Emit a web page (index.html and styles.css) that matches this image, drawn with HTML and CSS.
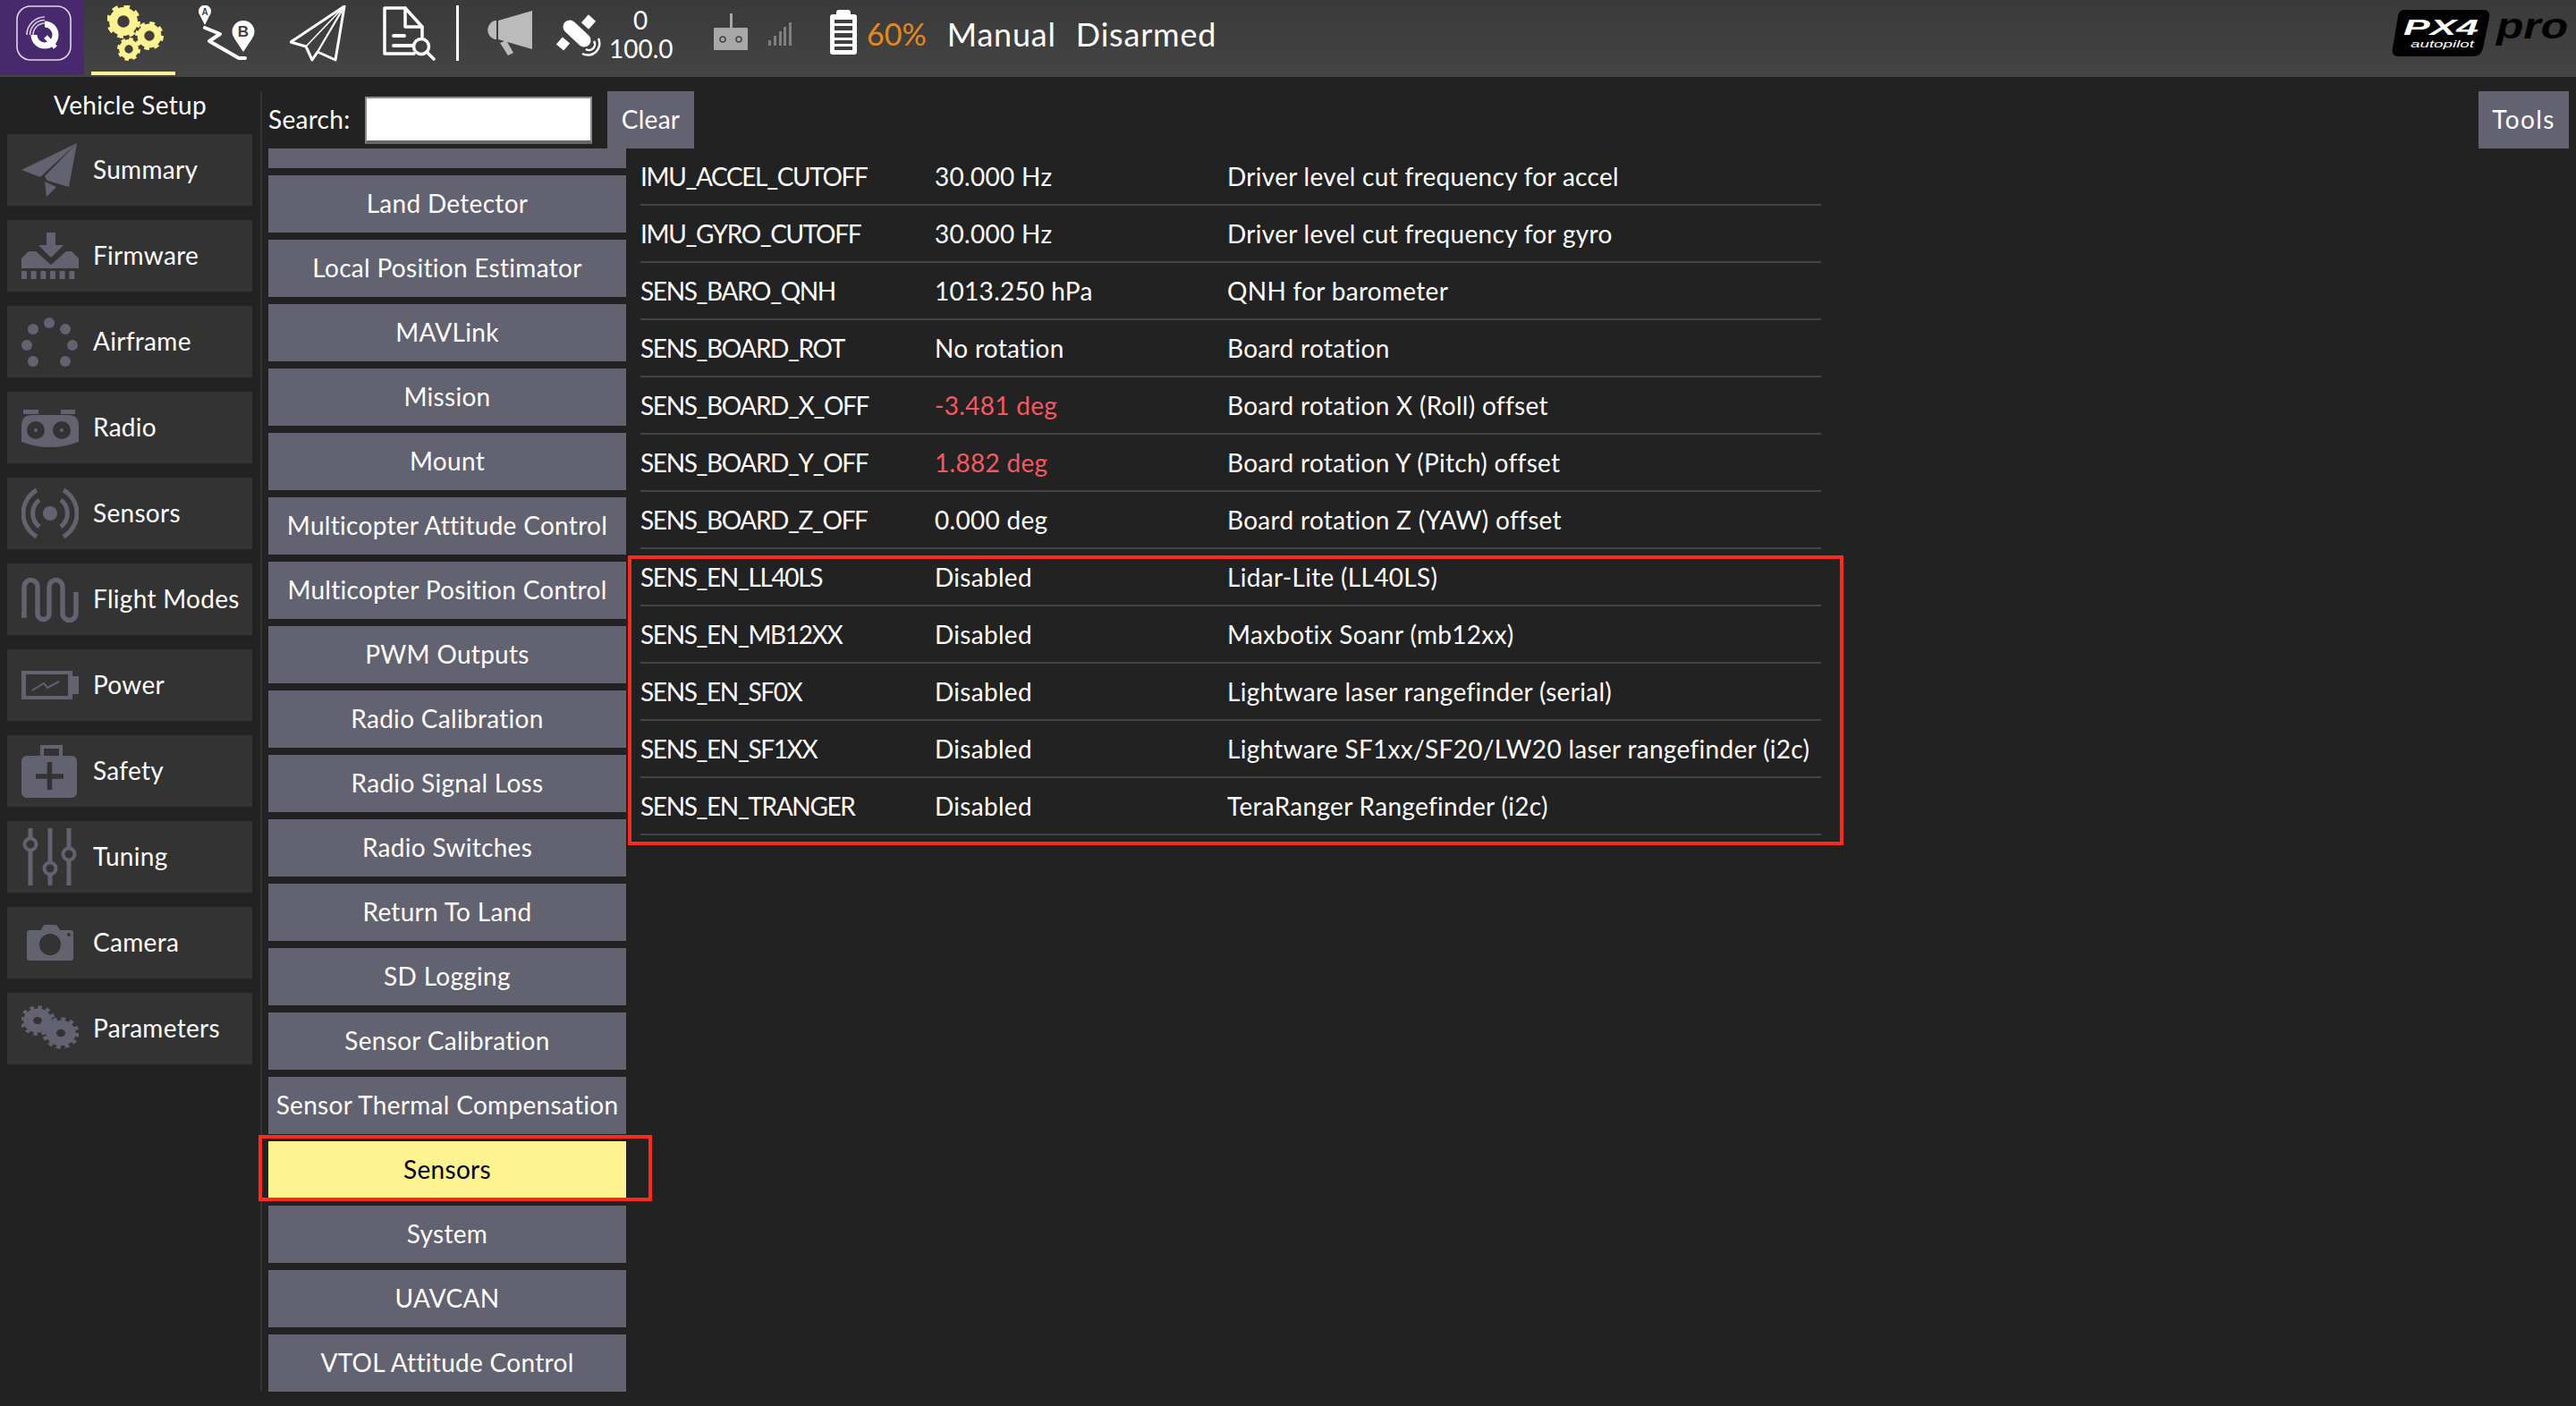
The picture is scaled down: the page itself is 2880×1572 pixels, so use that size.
FILE: index.html
```html
<!DOCTYPE html>
<html lang="en">
<head>
    <meta charset="UTF-8">
    <meta name="viewport" content="width=device-width, initial-scale=1.0">
    <title>QGroundControl</title>
    <link rel="stylesheet" href="styles.css">
</head>
<body>
    <svg class="defs" width="0" height="0">
        <symbol id="gear" viewBox="-50 -50 100 100">
            <circle r="30" fill="none" stroke="currentColor" stroke-width="24"/>
            <circle r="44" fill="none" stroke="currentColor" stroke-width="12" pathLength="16" stroke-dasharray="1 1"/>
        </symbol>
        <symbol id="cog" viewBox="-50 -50 100 100">
            <g transform="scale(1 .85)">
                <circle r="26" fill="none" stroke="currentColor" stroke-width="28"/>
                <circle r="44" fill="none" stroke="currentColor" stroke-width="11" pathLength="24" stroke-dasharray="1 1"/>
            </g>
        </symbol>
    </svg>

    <div class="toolbar">
        <div class="tool-btn brand">
            <svg class="tool-icon" viewBox="0 0 64 64" fill="none" stroke="#fff">
                <rect x="1" y="1" width="60" height="60" rx="15" stroke="#ddd8e6" stroke-width="1.6"/>
                <path d="M32 21A12 12 0 1 1 20 33" stroke-width="7"/>
                <path d="M33 35L44 47" stroke-width="5"/>
                <path d="M12 33A20 20 0 0 1 32 13M15.500 33A16.500 16.500 0 0 1 32 16.500M19 33A13 13 0 0 1 32 20" stroke="#d5cfe0" stroke-width="1.6"/>
            </svg>
        </div>
        <div class="tool-btn active">
            <svg class="tool-icon" viewBox="0 0 64 64">
                <use href="#gear" x="-1" y="-1" width="38" height="38"/>
                <use href="#gear" x="31" y="18" width="32" height="32"/>
                <use href="#gear" x="11" y="36" width="26" height="26"/>
            </svg>
        </div>
        <div class="tool-btn">
            <svg class="tool-icon" viewBox="0 0 64 64">
                <path d="M7 22L1.500 11A7 7 0 1 1 12.500 11Z" fill="#fff"/>
                <text class="pin-letter pin-a" x="7" y="11">A</text>
                <path d="M50 52L40 37A12.500 12.500 0 1 1 60 37Z" fill="#fff"/>
                <text class="pin-letter pin-b" x="50" y="35">B</text>
                <path d="M7 25L24 32L12 40L45 59L52 59" fill="none" stroke="#fff" stroke-width="4" stroke-linejoin="round" stroke-linecap="round"/>
            </svg>
        </div>
        <div class="tool-btn">
            <svg class="tool-icon" viewBox="0 0 64 64" fill="none" stroke="#fff" stroke-linejoin="round">
                <path d="M61 1L1 41L18 46L25 61L31 52L51 61Z" stroke-width="3"/>
                <path d="M61 1L18 46" stroke-width="1.600"/>
                <path d="M61 1L31 52" stroke-width="2.200"/>
            </svg>
        </div>
        <div class="tool-btn">
            <svg class="tool-icon" viewBox="0 0 64 64" fill="none" stroke="#fff" stroke-width="3.500" stroke-linejoin="round" stroke-linecap="round">
                <path d="M37 54H4V3H27L46 24V35"/>
                <path d="M27 3V24H46"/>
                <path d="M14 34H26M14 45H35" stroke-width="4"/>
                <circle cx="45" cy="46" r="8.500"/>
                <path d="M51 52L59 60"/>
            </svg>
        </div>
        <div class="tool-divider"></div>
        <svg class="status-icon megaphone" viewBox="0 0 56 64" fill="#bbb">
            <path d="M12 17A11 11 0 0 0 12 38H14V17Z"/>
            <path d="M16 17L54 6V49L16 38Z"/>
            <path d="M18 42L25 39L33 53L27 56Z"/>
        </svg>
        <svg class="status-icon satellite" viewBox="0 0 52 64" fill="none" stroke="#fff">
            <path d="M34 23L42 14" stroke-width="11"/>
            <path d="M6 47L13 39" stroke-width="11"/>
            <path d="M17 24L33 39" stroke-width="15" stroke-linecap="round"/>
            <path d="M49 37A13 13 0 0 1 31 54" stroke-width="2.500"/>
            <path d="M44 40A6.500 6.500 0 0 1 35 49" stroke-width="2.500"/>
        </svg>
        <div class="sat-count">
            <span>0</span>
            <span>100.0</span>
        </div>
        <svg class="status-icon remote" viewBox="0 0 38 64">
            <rect x="18" y="9" width="3" height="17" fill="#a8a8a8"/>
            <rect y="25" width="38" height="25" rx="1" fill="#a8a8a8"/>
            <circle cx="10" cy="38" r="3" fill="none" stroke="#444" stroke-width="1.500"/>
            <circle cx="28" cy="38" r="3" fill="none" stroke="#444" stroke-width="1.500"/>
        </svg>
        <svg class="status-icon signal" viewBox="0 0 26 64" fill="#808080">
            <rect x="0" y="39" width="3" height="6"/>
            <rect x="6" y="34" width="3" height="11"/>
            <rect x="12" y="29" width="3" height="16"/>
            <rect x="17" y="24" width="3" height="21"/>
            <rect x="23" y="19" width="3" height="26"/>
        </svg>
        <svg class="status-icon battery" viewBox="0 0 32 64">
            <path d="M8 8Q8 5 11 5H21Q24 5 24 8V10H28Q31 10 31 13V52Q31 55 28 55H4Q1 55 1 52V13Q1 10 4 10H8Z" fill="#fff"/>
            <path d="M6 16H26V20H6ZM6 23H26V28H6ZM6 31H26V36H6ZM6 39H26V43H6ZM6 46H26V50H6Z" fill="#3f3f3f"/>
        </svg>
        <span class="status-text percent">60%</span>
        <span class="status-text flight-mode">Manual</span>
        <span class="status-text armed">Disarmed</span>
        <svg class="brand-logo" width="200" height="64" viewBox="0 0 200 64">
            <path d="M16 5H104Q113 5 111 14L104 48Q102 57 92 57H10Q1 57 3 48L9 12Q10 5 16 5Z" fill="#000"/>
            <text class="logo-big" x="15" y="33" textLength="84" lengthAdjust="spacingAndGlyphs">PX4</text>
            <text class="logo-small" x="23" y="47" textLength="71" lengthAdjust="spacingAndGlyphs">autopilot</text>
            <text class="logo-pro" x="119" y="37" textLength="80" lengthAdjust="spacingAndGlyphs">pro</text>
        </svg>
    </div>

    <div class="main">
        <div class="sidebar">
            <div class="sidebar-title">Vehicle Setup</div>
            <a class="nav-item">
                <svg class="nav-icon" viewBox="0 0 64 64">
                    <path d="M62 2L0 32L21 40Z"/>
                    <path d="M62 2L26 39L29 44L53 51Z"/>
                    <path d="M26 45L39 51L28 62Z"/>
                </svg>
                <span>Summary</span>
            </a>
            <a class="nav-item">
                <svg class="nav-icon" viewBox="0 0 64 64">
                    <path d="M28 6H38V20H47L33 34L19 20H28Z"/>
                    <path d="M0 46V35L8 27H16L33 42L50 27H56L64 35V46Z"/>
                    <path d="M0 53.500H64" fill="none" stroke="#626270" stroke-width="9" stroke-dasharray="6 4.670"/>
                </svg>
                <span>Firmware</span>
            </a>
            <a class="nav-item">
                <svg class="nav-icon" viewBox="0 0 64 64">
                    <circle cx="31" cy="11" r="6"/>
                    <circle cx="13" cy="18" r="6"/>
                    <circle cx="49" cy="18" r="6"/>
                    <circle cx="6" cy="36" r="6"/>
                    <circle cx="57" cy="36" r="6"/>
                    <circle cx="13" cy="54" r="6"/>
                    <circle cx="49" cy="54" r="6"/>
                </svg>
                <span>Airframe</span>
            </a>
            <a class="nav-item">
                <svg class="nav-icon" viewBox="0 0 64 64">
                    <path d="M2 12H19V17H2ZM44 12H60V17H44Z"/>
                    <path d="M0 30Q0 18 12 18H52Q64 18 64 30V48Q32 60 0 48Z"/>
                    <circle cx="16" cy="35" r="10" fill="#333"/>
                    <circle cx="45" cy="35" r="10" fill="#333"/>
                    <circle cx="16" cy="35" r="2"/>
                    <circle cx="45" cy="35" r="2"/>
                </svg>
                <span>Radio</span>
            </a>
            <a class="nav-item">
                <svg class="nav-icon" viewBox="0 0 64 64">
                    <circle cx="32" cy="32" r="8"/>
                    <path d="M20 17A19 19 0 0 0 20 47M44 17A19 19 0 0 1 44 47M17 6A30 30 0 0 0 17 58M47 6A30 30 0 0 1 47 58" fill="none" stroke="#626270" stroke-width="5"/>
                </svg>
                <span>Sensors</span>
            </a>
            <a class="nav-item">
                <svg class="nav-icon" viewBox="0 0 64 64">
                    <path d="M0 50H3V18A7.500 7.500 0 0 1 18 18V48A6.500 6.500 0 0 0 31 48V18A7.500 7.500 0 0 1 46 18V48A7.500 7.500 0 0 0 61 48V24" fill="none" stroke="#626270" stroke-width="5.500"/>
                </svg>
                <span>Flight Modes</span>
            </a>
            <a class="nav-item">
                <svg class="nav-icon" viewBox="0 0 64 64">
                    <path d="M0 16H57V22H64V42H57V48H0Z"/>
                    <rect x="5" y="20" width="47" height="24" fill="#333"/>
                    <path d="M12 38L25 30L29 35L42 28" fill="none" stroke="#626270" stroke-width="2"/>
                </svg>
                <span>Power</span>
            </a>
            <a class="nav-item">
                <svg class="nav-icon" viewBox="0 0 64 64">
                    <path d="M23 16V5H44V16" fill="none" stroke="#626270" stroke-width="4"/>
                    <rect y="15" width="62" height="47" rx="6"/>
                    <path d="M16 38H47M31.500 22V53" fill="none" stroke="#333" stroke-width="5.500"/>
                </svg>
                <span>Safety</span>
            </a>
            <a class="nav-item">
                <svg class="nav-icon" viewBox="0 0 64 64">
                    <path d="M10 0V64M32 0V64M53 0V64" fill="none" stroke="#626270" stroke-width="5"/>
                    <circle cx="10" cy="18" r="6.500" fill="#333" stroke="#626270" stroke-width="4"/>
                    <circle cx="32" cy="45" r="6.500" fill="#333" stroke="#626270" stroke-width="4"/>
                    <circle cx="53" cy="29" r="6.500" fill="#333" stroke="#626270" stroke-width="4"/>
                </svg>
                <span>Tuning</span>
            </a>
            <a class="nav-item">
                <svg class="nav-icon" viewBox="0 0 64 64">
                    <path d="M21 19L25 12H39L44 19Z"/>
                    <rect x="6" y="18" width="52" height="34" rx="3"/>
                    <circle cx="32" cy="34" r="12" fill="#333"/>
                    <circle cx="53" cy="23" r="2" fill="#333"/>
                </svg>
                <span>Camera</span>
            </a>
            <a class="nav-item">
                <svg class="nav-icon" viewBox="0 0 64 64">
                    <use href="#cog" x="-2" y="3" width="40" height="40"/>
                    <use href="#cog" x="23" y="16" width="42" height="42"/>
                </svg>
                <span>Parameters</span>
            </a>
        </div>
        <div class="sidebar-line"></div>
        <div class="panel">
            <div class="search-row">
                <span class="search-label">Search:</span>
                <input class="search-input" type="text">
                <div class="btn clear-btn">Clear</div>
                <div class="btn tools-btn">Tools</div>
            </div>
            <div class="panel-body">
                <div class="group-list">
                    <div class="btn group-btn"></div>
                    <div class="btn group-btn">Land Detector</div>
                    <div class="btn group-btn">Local Position Estimator</div>
                    <div class="btn group-btn">MAVLink</div>
                    <div class="btn group-btn">Mission</div>
                    <div class="btn group-btn">Mount</div>
                    <div class="btn group-btn">Multicopter Attitude Control</div>
                    <div class="btn group-btn">Multicopter Position Control</div>
                    <div class="btn group-btn">PWM Outputs</div>
                    <div class="btn group-btn">Radio Calibration</div>
                    <div class="btn group-btn">Radio Signal Loss</div>
                    <div class="btn group-btn">Radio Switches</div>
                    <div class="btn group-btn">Return To Land</div>
                    <div class="btn group-btn">SD Logging</div>
                    <div class="btn group-btn">Sensor Calibration</div>
                    <div class="btn group-btn">Sensor Thermal Compensation</div>
                    <div class="btn group-btn selected">Sensors</div>
                    <div class="btn group-btn">System</div>
                    <div class="btn group-btn">UAVCAN</div>
                    <div class="btn group-btn">VTOL Attitude Control</div>
                </div>
                <table class="param-table">
                    <tr><td>IMU_ACCEL_CUTOFF</td><td>30.000 Hz</td><td>Driver level cut frequency for accel</td></tr>
                    <tr><td>IMU_GYRO_CUTOFF</td><td>30.000 Hz</td><td>Driver level cut frequency for gyro</td></tr>
                    <tr><td>SENS_BARO_QNH</td><td>1013.250 hPa</td><td>QNH for barometer</td></tr>
                    <tr><td>SENS_BOARD_ROT</td><td>No rotation</td><td>Board rotation</td></tr>
                    <tr><td>SENS_BOARD_X_OFF</td><td class="changed">-3.481 deg</td><td>Board rotation X (Roll) offset</td></tr>
                    <tr><td>SENS_BOARD_Y_OFF</td><td class="changed">1.882 deg</td><td>Board rotation Y (Pitch) offset</td></tr>
                    <tr><td>SENS_BOARD_Z_OFF</td><td>0.000 deg</td><td>Board rotation Z (YAW) offset</td></tr>
                    <tr><td>SENS_EN_LL40LS</td><td>Disabled</td><td>Lidar-Lite (LL40LS)</td></tr>
                    <tr><td>SENS_EN_MB12XX</td><td>Disabled</td><td>Maxbotix Soanr (mb12xx)</td></tr>
                    <tr><td>SENS_EN_SF0X</td><td>Disabled</td><td>Lightware laser rangefinder (serial)</td></tr>
                    <tr><td>SENS_EN_SF1XX</td><td>Disabled</td><td>Lightware SF1xx/SF20/LW20 laser rangefinder (i2c)</td></tr>
                    <tr><td>SENS_EN_TRANGER</td><td>Disabled</td><td>TeraRanger Rangefinder (i2c)</td></tr>
                </table>
            </div>
        </div>
    </div>

    <!-- red annotation boxes -->
    <div class="mark mark-rows"></div>
    <div class="mark mark-group"></div>
</body>
</html>
```

FILE: styles.css
```css
html, body {
    margin: 0;
    height: 100%;
}
body {
    position: relative;
    height: 1572px;
    overflow: hidden;
    background-color: #222222;
    color: #ffffff;
    font-family: Lato, "Open Sans", sans-serif;
    font-size: 28px;
}
.defs {
    position: absolute;
}

/* top toolbar */
.toolbar {
    display: flex;
    align-items: flex-start;
    height: 86px;
    background: linear-gradient(#3a3a3a, #444444);
}
.tool-btn {
    box-sizing: border-box;
    width: 94px;
    height: 84px;
    margin-right: 8px;
    padding: 6px 0 0 18px;
}
.tool-icon {
    display: block;
    width: 64px;
    height: 64px;
}
.brand {
    background-color: #48296e;
}
.active {
    color: #fff291;
    border-bottom: 4px solid #fff291;
}
.pin-letter {
    font-family: "Liberation Sans", sans-serif;
    font-weight: bold;
    text-anchor: middle;
    fill: #3f3f3f;
}
.pin-a {
    font-size: 10px;
}
.pin-b {
    font-size: 17px;
}
.tool-divider {
    width: 3px;
    height: 62px;
    margin-top: 6px;
    background-color: #ffffff;
}
.status-icon {
    display: block;
    height: 64px;
    margin-top: 6px;
}
.megaphone {
    width: 56px;
    margin-left: 28px;
}
.satellite {
    width: 52px;
    margin-left: 23px;
}
.sat-count {
    display: flex;
    flex-direction: column;
    width: 70px;
    margin: 6px 0 0 9px;
    text-align: center;
    line-height: 32px;
}
.remote {
    width: 38px;
    margin-left: 47px;
}
.signal {
    width: 26px;
    margin-left: 23px;
}
.battery {
    width: 32px;
    margin-left: 42px;
}
.status-text {
    margin-top: 6px;
    line-height: 64px;
    font-size: 36px;
    letter-spacing: .8px;
}
.percent {
    margin-left: 10px;
    font-size: 34px;
    letter-spacing: 0;
    color: #e38a1e;
}
.flight-mode {
    margin-left: 23px;
}
.armed {
    margin-left: 22px;
}
.brand-logo {
    margin: 6px 8px 0 auto;
}
.logo-big {
    font: italic bold 24px "Liberation Sans", sans-serif;
    fill: #ffffff;
}
.logo-small {
    font: italic 11px "Liberation Sans", sans-serif;
    fill: #ffffff;
}
.logo-pro {
    font: italic bold 40px "Liberation Sans", sans-serif;
    fill: #000000;
}

/* page below the toolbar */
.main {
    display: flex;
    height: 1486px;
    letter-spacing: .3px;
}
.sidebar {
    box-sizing: border-box;
    width: 291px;
    padding-left: 8px;
}
.sidebar-title {
    width: 275px;
    height: 64px;
    line-height: 62px;
    text-align: center;
}
.nav-item {
    display: flex;
    align-items: center;
    box-sizing: border-box;
    width: 274px;
    height: 80px;
    margin-bottom: 16px;
    padding-left: 16px;
    background-color: #333333;
}
.nav-item span {
    margin-bottom: 2px;
}
.nav-icon {
    flex: none;
    width: 64px;
    height: 64px;
    margin-right: 16px;
    color: #626270;
    fill: #626270;
}
.sidebar-line {
    width: 2px;
    height: 1454px;
    margin-top: 16px;
    background-color: #333333;
}
.panel {
    flex: 1;
    min-width: 0;
    padding: 16px 8px 0 7px;
}
.search-row {
    display: flex;
    height: 64px;
}
.search-label {
    width: 108px;
    line-height: 62px;
}
.search-input {
    box-sizing: border-box;
    width: 254px;
    height: 53px;
    margin: 6px 17px 0 0;
    padding: 0;
    background-color: #ffffff;
    border: 2px solid #8a8a8a;
    border-bottom: 4px solid #666666;
    border-radius: 0;
    outline: none;
}
.btn {
    box-sizing: border-box;
    text-align: center;
    line-height: 62px;
    background-color: #626270;
}
.clear-btn {
    width: 97px;
}
.tools-btn {
    width: 101px;
    margin-left: auto;
    letter-spacing: 1.4px;
}
.panel-body {
    display: flex;
    height: 1390px;
}
.group-list {
    flex: none;
    width: 400px;
    height: 100%;
    overflow: hidden;
}
.group-btn {
    height: 64px;
    margin-bottom: 8px;
    white-space: nowrap;
}
.group-btn:first-child {
    margin-top: -42px;
}
.selected {
    background-color: #fff291;
    color: #000000;
}
.param-table {
    width: 1320px;
    height: 768px;
    margin-left: 16px;
    border-collapse: separate;
    border-spacing: 0;
    table-layout: fixed;
}
.param-table td {
    height: 62px;
    padding: 0;
    border-bottom: 2px solid #444444;
    white-space: nowrap;
}
.param-table td:nth-child(1) {
    width: 329px;
    letter-spacing: -1.35px;
}
.param-table td:nth-child(2) {
    width: 327px;
}
.changed {
    color: #f85761;
}

/* annotations drawn over the screenshot */
.mark {
    position: absolute;
    box-sizing: border-box;
    border: 4px solid #ff2a1c;
}
.mark-rows {
    left: 702px;
    top: 621px;
    width: 1359px;
    height: 324px;
}
.mark-group {
    left: 289px;
    top: 1269px;
    width: 440px;
    height: 74px;
}
```
